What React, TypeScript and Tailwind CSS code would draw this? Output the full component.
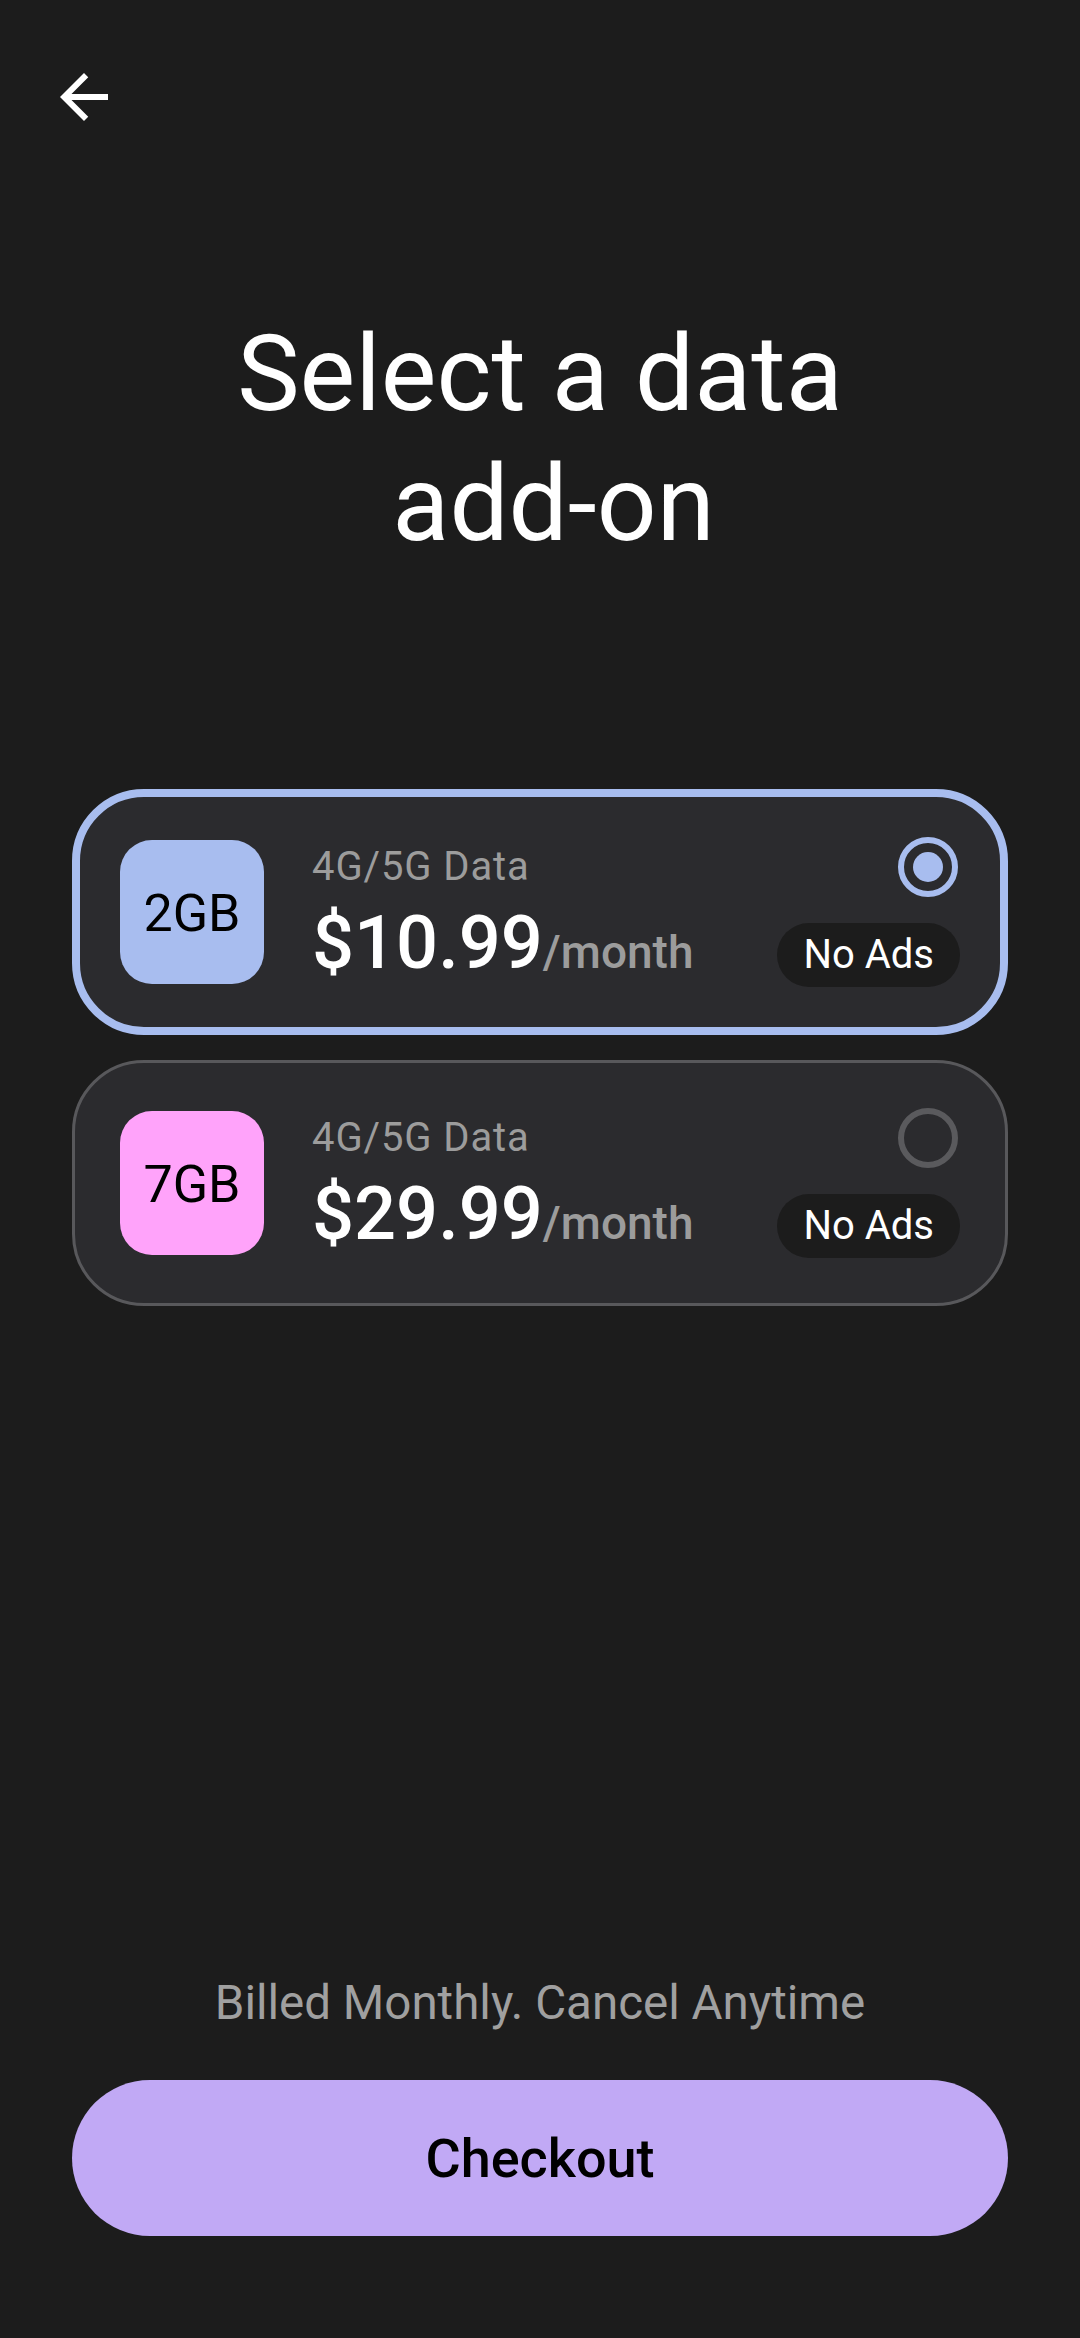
import clsx from "clsx";

const PLANS = [
  { size: "2GB", price: "$10.99", tile: "bg-[#a8bdef]", selected: true },
  { size: "7GB", price: "$29.99", tile: "bg-[#ffa3fa]", selected: false },
];

function BackArrow() {
  return (
    <svg width="72" height="72" viewBox="0 0 24 24" fill="#ffffff">
      <path d="M20 11H7.83l5.59-5.59L12 4l-8 8 8 8 1.41-1.41L7.83 13H20v-2z" />
    </svg>
  );
}

function Radio({ on }: { on: boolean }) {
  return (
    <div
      className={clsx(
        "flex h-[60px] w-[60px] items-center justify-center rounded-full border-[6px]",
        on ? "border-[#a8bdef]" : "border-[#5a5a5d]"
      )}
    >
      {on && <div className="h-[30px] w-[30px] rounded-full bg-[#a8bdef]" />}
    </div>
  );
}

function PlanCard({ plan }: { plan: (typeof PLANS)[number] }) {
  return (
    <div
      className={clsx(
        "flex h-[246px] items-stretch rounded-[72px] bg-[#2b2b2e]",
        plan.selected
          ? "border-[8px] border-[#a8bdef] px-[40px] py-[40px]"
          : "border-[3px] border-[#58585b] px-[45px] py-[45px]"
      )}
    >
      <div
        className={clsx(
          "flex h-[144px] w-[144px] shrink-0 items-center justify-center self-center rounded-[32px] pt-[4px] text-[52px] leading-none text-black",
          plan.tile
        )}
      >
        {plan.size}
      </div>
      <div className="ml-[48px] flex flex-col justify-center pt-[5px]">
        <div className="text-[40px] leading-[48px] tracking-[0.9px] text-[#9c9c9c]">4G/5G Data</div>
        <div className="mt-[10px] flex items-baseline">
          <span className="text-[74px] font-medium leading-[84px] text-white">{plan.price}</span>
          <span className="text-[46px] font-medium text-[#9c9c9c]">/month</span>
        </div>
      </div>
      <div className="ml-auto flex flex-col items-end justify-between">
        <div className="pr-[2px]">
          <Radio on={plan.selected} />
        </div>
        <div className="flex h-[64px] items-center rounded-full bg-[#1c1c1c] px-[26px] text-[40px] text-white">
          No Ads
        </div>
      </div>
    </div>
  );
}

export default function App() {
  return (
    <div className="flex h-[2338px] w-full flex-col bg-[#1c1c1c] font-['Roboto',sans-serif]">
      <div className="pl-[48px] pt-[61px]">
        <BackArrow />
      </div>

      <h1 className="mt-[177px] text-center text-[105px] leading-[130px] text-white">
        <span className="block">Select a data</span>
        <span className="block pl-[27px]">add-on</span>
      </h1>

      <div className="mx-[72px] mt-[219px] flex flex-col gap-[25px]">
        {PLANS.map((p) => (
          <PlanCard key={p.size} plan={p} />
        ))}
      </div>

      <div className="flex-1" />

      <p className="text-center text-[47.5px] leading-[64px] text-[#a0a0a0]">
        Billed Monthly. Cancel Anytime
      </p>
      <button className="mx-[72px] mt-[45px] mb-[102px] flex h-[156px] items-center justify-center rounded-full bg-[#c1a9f5] text-[54px] font-medium text-black">
        Checkout
      </button>
    </div>
  );
}
